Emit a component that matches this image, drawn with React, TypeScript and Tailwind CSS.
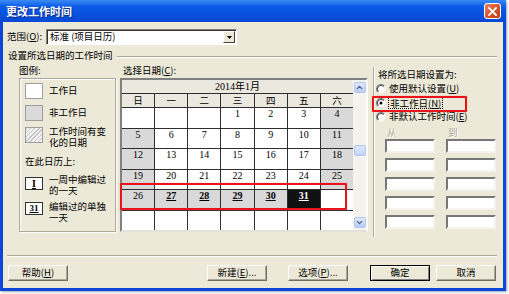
import { ChevronUp, ChevronDown } from "lucide-react";

// January 2014 — starts on a Wednesday
const weeks: (number | null)[][] = [
	[null, null, null, 1, 2, 3, 4],
	[5, 6, 7, 8, 9, 10, 11],
	[12, 13, 14, 15, 16, 17, 18],
	[19, 20, 21, 22, 23, 24, 25],
	[26, 27, 28, 29, 30, 31, null],
	[null, null, null, null, null, null, null],
];
const weekdays = ["日", "一", "二", "三", "四", "五", "六"];
const edited = [27, 28, 29, 30, 31];

// "帮助(&H)" -> underline the letter after &
function Acc({ text }: { text: string }) {
	const i = text.indexOf("&");
	if (i < 0) return <>{text}</>;
	return (
		<>
			{text.slice(0, i)}
			<u>{text[i + 1]}</u>
			{text.slice(i + 2)}
		</>
	);
}

function Radio({ checked }: { checked?: boolean }) {
	return (
		<svg width="10" height="10" viewBox="0 0 12 12" className="shrink-0">
			<circle cx="6" cy="6" r="5.2" fill="#fff" />
			<path d="M2.3 9.7 A5.2 5.2 0 0 1 9.7 2.3" stroke="#7d7d7d" strokeWidth="1.6" fill="none" />
			<path d="M3 9 A4.2 4.2 0 0 1 9 3" stroke="#303030" strokeWidth="1" fill="none" />
			{checked && <circle cx="6" cy="6" r="1.8" fill="#000" />}
		</svg>
	);
}

function Button({ label, isDefault, className = "" }: { label: string; isDefault?: boolean; className?: string }) {
	return (
		<div
			className={`w-[60px] h-[16px] flex items-center justify-center bg-[#ece9d8] text-black ${
				isDefault
					? "border border-black shadow-[inset_1px_1px_0_#fff,inset_-1px_-1px_0_#808080]"
					: "border border-t-white border-l-white border-r-[#716f64] border-b-[#716f64] shadow-[inset_-1px_-1px_0_#aca899]"
			} ${className}`}
		>
			<span className="leading-none">
				<Acc text={label} />
			</span>
		</div>
	);
}

function Swatch({ className }: { className: string }) {
	return <div className={`w-[18px] h-[16px] shrink-0 border border-[#9d9d9d] ${className}`} />;
}

// two-line caption next to a legend swatch
function Caption({ lines, className = "" }: { lines: [string, string]; className?: string }) {
	return (
		<div className={`ml-[6px] flex flex-col ${className}`}>
			<span className="h-[11px] leading-[11px]">{lines[0]}</span>
			<span className="h-[11px] leading-[11px]">{lines[1]}</span>
		</div>
	);
}

export default function App() {
	return (
		<div className="w-[509px] h-[294px] bg-white overflow-hidden font-['Noto_Sans_CJK_SC','Liberation_Sans',sans-serif] text-[9.5px] text-black">
			<div className="w-[506px] h-[291px] flex flex-col bg-[#0c47d8] shadow-[1px_1px_2px_#9aa3b8]">
				{/* title bar */}
				<div className="h-[22px] flex items-center pl-[6px] pr-[5px] bg-gradient-to-b from-[#3b8af5] via-[#0a5be8] via-30% to-[#0848d6]">
					<span className="text-white font-bold text-[11px] leading-none [text-shadow:1px_1px_0_#0a2a88]">
						更改工作时间
					</span>
					<div className="ml-auto w-[17px] h-[16px] rounded-[3px] border border-white bg-gradient-to-br from-[#e9825e] via-[#d9552e] to-[#c23c16] flex items-center justify-center">
						<svg width="9" height="9" viewBox="0 0 9 9">
							<path d="M1 1 L8 8 M8 1 L1 8" stroke="#fff" strokeWidth="1.8" strokeLinecap="square" />
						</svg>
					</div>
				</div>

				{/* dialog body */}
				<div className="mx-[3px] h-[266px] bg-[#ece9d8] pt-[7px] pl-[4px] pr-[6px] flex flex-col">
					{/* 范围 */}
					<div className="h-[16px] flex items-center">
						<span className="w-[39px] leading-none">
							<Acc text="范围(&O):" />
						</span>
						<div className="w-[191px] h-[16px] bg-white border border-t-[#808080] border-l-[#808080] border-r-white border-b-white shadow-[inset_1px_1px_0_#303030] flex items-center pl-[3px]">
							<span className="leading-none">标准 (项目日历)</span>
							<div className="ml-auto mr-px w-[12px] h-[12px] bg-[#ece9d8] border border-t-white border-l-white border-r-[#404040] border-b-[#404040] flex items-center justify-center">
								<svg width="5" height="3" viewBox="0 0 5 3">
									<path d="M0 0 H5 L2.5 3 Z" fill="#000" />
								</svg>
							</div>
						</div>
					</div>

					{/* group label */}
					<div className="mt-[4px] h-[12px] flex items-center pl-px">
						<span className="leading-[12px]">设置所选日期的工作时间</span>
						<div className="flex-1 ml-[4px] mt-[3px] h-[2px] border-t border-t-[#aca899] border-b border-b-white" />
					</div>

					{/* main area */}
					<div className="mt-[2px] h-[175px] flex items-start">
						{/* legend */}
						<div className="ml-[12px] w-[97px] flex flex-col">
							<div className="mt-px h-[12px] leading-[12px]">图例:</div>
							<div className="mt-[2px] h-[154px] border border-[#aca899] shadow-[inset_1px_1px_0_#fff,1px_1px_0_#fff] pl-[5px] pt-[4px] flex flex-col">
								<div className="h-[16px] flex items-center">
									<Swatch className="bg-white" />
									<span className="ml-[6px] leading-none">工作日</span>
								</div>
								<div className="mt-[6px] h-[16px] flex items-center">
									<Swatch className="bg-[#dadada]" />
									<span className="ml-[6px] leading-none">非工作日</span>
								</div>
								<div className="mt-[6px] h-[22px] flex items-start">
									<Swatch className="bg-[repeating-linear-gradient(135deg,#c4c4c4_0px,#c4c4c4_1px,#f2f2f2_1px,#f2f2f2_3px)]" />
									<Caption lines={["工作时间有变", "化的日期"]} className="-mt-px" />
								</div>
								<div className="mt-[6px] h-[12px] leading-[12px]">在此日历上:</div>
								<div className="mt-[10px] h-[20px] flex items-start">
									<div className="w-[18px] h-[13px] shrink-0 bg-white border border-[#303030] flex items-center justify-center">
										<span className="font-['Liberation_Serif',serif] font-bold underline text-[10px] leading-none">I</span>
									</div>
									<Caption lines={["一周中编辑过", "的一天"]} className="-mt-[3px]" />
								</div>
								<div className="mt-[5px] h-[20px] flex items-start">
									<div className="w-[18px] h-[13px] shrink-0 bg-white border border-[#303030] flex items-center justify-center">
										<span className="font-['Liberation_Serif',serif] font-bold underline text-[9px] leading-none">31</span>
									</div>
									<Caption lines={["编辑过的单独", "一天"]} className="-mt-px" />
								</div>
							</div>
						</div>

						{/* calendar */}
						<div className="ml-[4px] w-[248px] flex flex-col">
							<div className="mt-px h-[12px] leading-[12px] pl-[3px]">
								<Acc text="选择日期(&C):" />
							</div>
							<div className="relative mt-[2px] h-[154px] border-2 border-t-[#808080] border-l-[#808080] border-r-white border-b-[#e4e2d6] shadow-[inset_1px_1px_0_#202020] flex">
								<div className="w-[231px] flex flex-col">
									<div className="h-[13px] bg-[#ebe9df] flex items-center justify-center">
										<span className="font-['Liberation_Serif','Noto_Sans_CJK_SC',serif] text-[10px] leading-none">
											2014年1月
										</span>
									</div>
									<div className="h-[137px] bg-[#2e2e2e] pt-px grid grid-cols-7 grid-rows-[13px_repeat(6,minmax(0,1fr))] gap-px">
										{weekdays.map((d) => (
											<div key={d} className="bg-[#ebe9df] flex items-center justify-center leading-none">
												{d}
											</div>
										))}
										{weeks.flatMap((week, r) =>
											week.map((n, c) => {
												const isEdited = n !== null && edited.includes(n);
												const weekend = n !== null && (c === 0 || c === 6);
												const bg =
													n === 31
														? "bg-[#111] text-white"
														: isEdited || weekend
															? "bg-[#d9d9d9]"
															: "bg-white";
												return (
													<div
														key={`${r}-${c}`}
														className={`${bg} flex justify-center pt-px font-['Liberation_Serif',serif] text-[10px] leading-[10px] ${
															isEdited ? "font-bold underline" : ""
														}`}
													>
														{n}
													</div>
												);
											}),
										)}
									</div>
								</div>
								{/* scrollbar */}
								<div className="w-[13px] bg-[#f4f3ee] flex flex-col items-center">
									<div className="mt-[2px] w-[12px] h-[11px] rounded-[2px] bg-gradient-to-b from-[#e0e9fd] to-[#b9cdf7] border border-[#b3c6f0] flex items-center justify-center">
										<ChevronUp size={9} strokeWidth={3.5} color="#4d6185" />
									</div>
									<div className="mt-[52px] w-[12px] h-[11px] rounded-[2px] bg-gradient-to-b from-[#dfe8fd] to-[#c2d3fa] border border-[#b3c6f0]" />
									<div className="flex-1" />
									<div className="mb-[2px] w-[12px] h-[11px] rounded-[2px] bg-gradient-to-b from-[#e0e9fd] to-[#b9cdf7] border border-[#b3c6f0] flex items-center justify-center">
										<ChevronDown size={9} strokeWidth={3.5} color="#4d6185" />
									</div>
								</div>
								{/* highlight over the last week */}
								<div className="absolute left-[-2px] top-[103px] w-[227px] h-[27px] border-2 border-[#e8141c] rounded-[1px] shadow-[0_0_1px_#f06060]" />
							</div>
						</div>

						{/* set selected dates to */}
						<div className="relative ml-[5px] mt-[4px] flex-1 h-[170px] border-l border-l-[#aca899] shadow-[inset_1px_0_0_#fff] flex flex-col">
							<div className="mt-px h-[12px] leading-[12px] pl-[4px]">将所选日期设置为:</div>
							<div className="mt-[2px] h-[14px] flex items-center pl-[2px]">
								<Radio />
								<span className="ml-[3px] leading-none">
									<Acc text="使用默认设置(&U)" />
								</span>
							</div>
							<div className="h-[14px] flex items-center pl-[2px]">
								<Radio checked />
								<span className="ml-[2px] px-px leading-[10px] border border-dotted border-black">
									<Acc text="非工作日(&N)" />
								</span>
							</div>
							<div className="h-[14px] flex items-center pl-[2px]">
								<Radio />
								<span className="ml-[3px] leading-none">
									<Acc text="非默认工作时间(&E)" />
								</span>
							</div>
							<div className="mt-[3px] h-[10px] flex leading-[10px] text-[#aca899] [text-shadow:1px_1px_0_#fff]">
								<span className="ml-[13px] w-[61px]">从</span>
								<span>到</span>
							</div>
							<div className="mt-[2px] flex flex-col gap-[5px]">
								{[0, 1, 2, 3, 4].map((i) => (
									<div key={i} className="flex gap-[11px] pl-[11px]">
										<div className="w-[50px] h-[14px] bg-white border-2 border-t-[#777] border-l-[#777] border-r-[#f4f3ee] border-b-[#f4f3ee]" />
										<div className="w-[50px] h-[14px] bg-white border-2 border-t-[#777] border-l-[#777] border-r-[#f4f3ee] border-b-[#f4f3ee]" />
									</div>
								))}
							</div>
							{/* highlight around 非工作日 */}
							<div className="absolute left-[-2px] top-[29px] w-[95px] h-[16px] border-2 border-[#e8141c] rounded-[1px] shadow-[0_0_1px_#f06060]" />
						</div>
					</div>

					{/* separator */}
					<div className="mt-[17px] h-[2px] border-t border-t-[#aca899] border-b border-b-white" />

					{/* buttons */}
					<div className="mt-[8px] flex">
						<Button label="帮助(&H)" className="ml-px" />
						<Button label="新建(&E)..." className="ml-[139px]" />
						<Button label="选项(&P)..." className="ml-[21px]" />
						<Button label="确定" isDefault className="ml-[22px]" />
						<Button label="取消" className="ml-[6px]" />
					</div>
				</div>
			</div>
		</div>
	);
}
